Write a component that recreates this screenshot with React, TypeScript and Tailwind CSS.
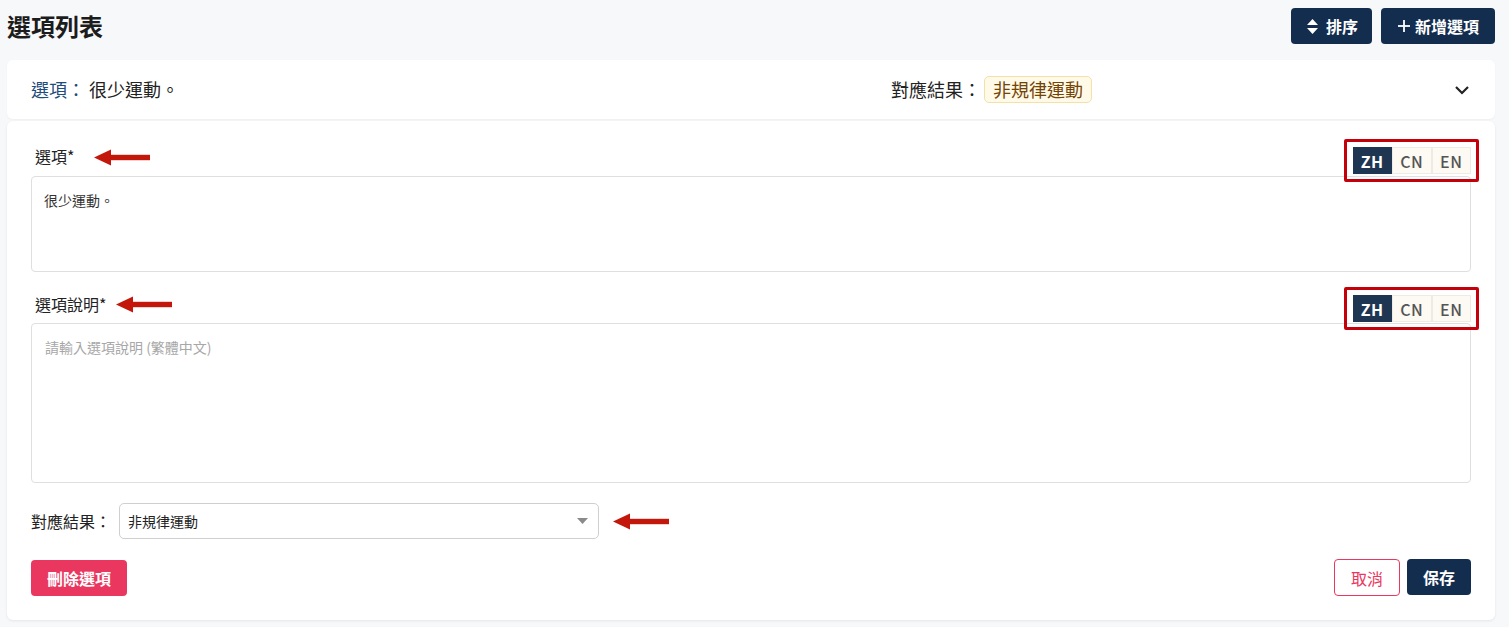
import { useState } from "react";

const FONT = { fontFamily: '"Noto Sans CJK TC", "Noto Sans", sans-serif' };

/** 紅色標註箭頭 */
function RedArrow() {
  return (
    <svg width="56" height="17" viewBox="0 0 56 17" className="shrink-0">
      <polygon points="0,8.5 17,0.5 17,16.5" fill="#c4170c" />
      <rect x="15" y="5.8" width="41" height="5.4" fill="#c4170c" />
    </svg>
  );
}

function LangToggle() {
  const [lang, setLang] = useState("ZH");
  return (
    <div className="relative">
      <div className="pointer-events-none absolute -top-[8px] -bottom-[8px] -left-[9px] -right-[8px] rounded-[2px] border-[3px] border-[#c4000a]" />
      <div className="flex h-[27px]">
        {["ZH", "CN", "EN"].map((l) => (
          <button
            key={l}
            type="button"
            onClick={() => setLang(l)}
            className={`flex h-[27px] w-[39.5px] items-center justify-center text-[16px] leading-none tracking-[0.5px] ${
              lang === l
                ? "bg-[#1f3652] font-bold text-white"
                : "border border-[#efebe4] bg-[#fdf9f3] font-medium text-[#555]"
            }`}
          >
            {l}
          </button>
        ))}
      </div>
    </div>
  );
}

function FieldHead({ label, gap }: { label: string; gap: string }) {
  return (
    <div className="flex h-[27px] items-end justify-between">
      <div className="mb-[8px] flex items-center">
        <label className="ml-[4px] text-[16px] leading-[20px] text-[#222]">{label}</label>
        <span className={gap}>
          <RedArrow />
        </span>
      </div>
      <LangToggle />
    </div>
  );
}

export default function App() {
  return (
    <div style={FONT} className="min-h-[627px] w-[1509px] bg-[#f7f8fa] text-[#222]">
      {/* 標題列 */}
      <div className="flex h-[60px] items-start justify-between pt-[8px] pl-[7px] pr-[14px]">
        <h1 className="flex h-9 items-center text-[24px] font-bold text-[#1c1c1c]">選項列表</h1>
        <div className="flex gap-[9px]">
          <button
            type="button"
            className="flex h-9 items-center gap-2 rounded-[4px] bg-[#132d4f] pl-4 pr-[14px] text-[16px] font-bold text-white"
          >
            <svg width="11" height="15" viewBox="0 0 11 15">
              <polygon points="5.5,0 11,6 0,6" fill="#fff" />
              <polygon points="5.5,15 11,9 0,9" fill="#fff" />
            </svg>
            排序
          </button>
          <button
            type="button"
            className="flex h-9 items-center gap-[5px] rounded-[4px] bg-[#132d4f] pl-[17px] pr-4 text-[16px] font-bold text-white"
          >
            <svg width="12" height="12" viewBox="0 0 12 12">
              <rect x="5.1" y="0" width="1.8" height="12" fill="#fff" />
              <rect x="0" y="5.1" width="12" height="1.8" fill="#fff" />
            </svg>
            新增選項
          </button>
        </div>
      </div>

      <div className="ml-[7px] w-[1488px]">
        {/* 選項標頭 */}
        <div className="flex h-[59px] items-center rounded-[6px] bg-white pl-6 pr-[24px] shadow-[0_1px_2px_rgba(0,0,0,0.04)]">
          <div className="flex w-[860px] shrink-0 items-center whitespace-pre text-[18px]">
            <span className="text-[#1f4d7b]">選項： </span>
            <span className="text-[#222]">很少運動。</span>
          </div>
          <div className="flex flex-1 items-center text-[18px]">
            <span className="text-[#222]">對應結果：</span>
            <span className="ml-[3px] flex h-[27px] items-center rounded-[5px] border border-[#f3e1aa] bg-[#fffae8] px-[8px] text-[#744406]">
              非規律運動
            </span>
          </div>
          <svg width="16" height="10" viewBox="0 0 16 10" className="mr-[1px]">
            <polyline points="2,2 8,8 14,2" fill="none" stroke="#222" strokeWidth="2.2" />
          </svg>
        </div>

        {/* 編輯區 */}
        <div className="mt-[2px] rounded-[6px] bg-white px-6 pt-[26px] pb-6 shadow-[0_1px_3px_rgba(0,0,0,0.08)]">
          <FieldHead label="選項*" gap="ml-[20px] mt-[3px]" />
          <div className="mt-[2px] h-[96px] rounded-[4px] border border-[#dfdfdf] px-[12px] py-[13px] text-[14px] text-[#333]">
            很少運動。
          </div>

          <div className="mt-[23px]">
            <FieldHead label="選項說明*" gap="ml-[10px]" />
          </div>
          <div className="mt-[1px] h-[160px] rounded-[4px] border border-[#dfdfdf] px-[13px] py-[13px] text-[14px] text-[#a7a7a7]">
            請輸入選項說明 (繁體中文)
          </div>

          <div className="mt-5 flex items-center">
            <span className="text-[16px] text-[#222]">對應結果：</span>
            <div className="ml-[8px] flex h-[36px] w-[480px] items-center justify-between rounded-[5px] border border-[#cfcfcf] pl-[8px] pr-[10px] text-[14px] text-[#222]">
              非規律運動
              <svg width="11" height="6" viewBox="0 0 11 6">
                <polygon points="0,0 11,0 5.5,6" fill="#8a8a8a" />
              </svg>
            </div>
            <span className="ml-[14px]">
              <RedArrow />
            </span>
          </div>

          <div className="mt-5 flex items-center justify-between">
            <button
              type="button"
              className="h-9 rounded-[4px] bg-[#e9375f] px-4 text-[16px] font-bold text-white"
            >
              刪除選項
            </button>
            <div className="flex gap-[7px]">
              <button
                type="button"
                className="h-[37px] rounded-[4px] border border-[#e9375f] bg-white px-[16px] text-[16px] text-[#e9375f]"
              >
                取消
              </button>
              <button
                type="button"
                className="h-9 rounded-[4px] bg-[#132d4f] px-4 text-[16px] font-bold text-white"
              >
                保存
              </button>
            </div>
          </div>
        </div>
      </div>
    </div>
  );
}
